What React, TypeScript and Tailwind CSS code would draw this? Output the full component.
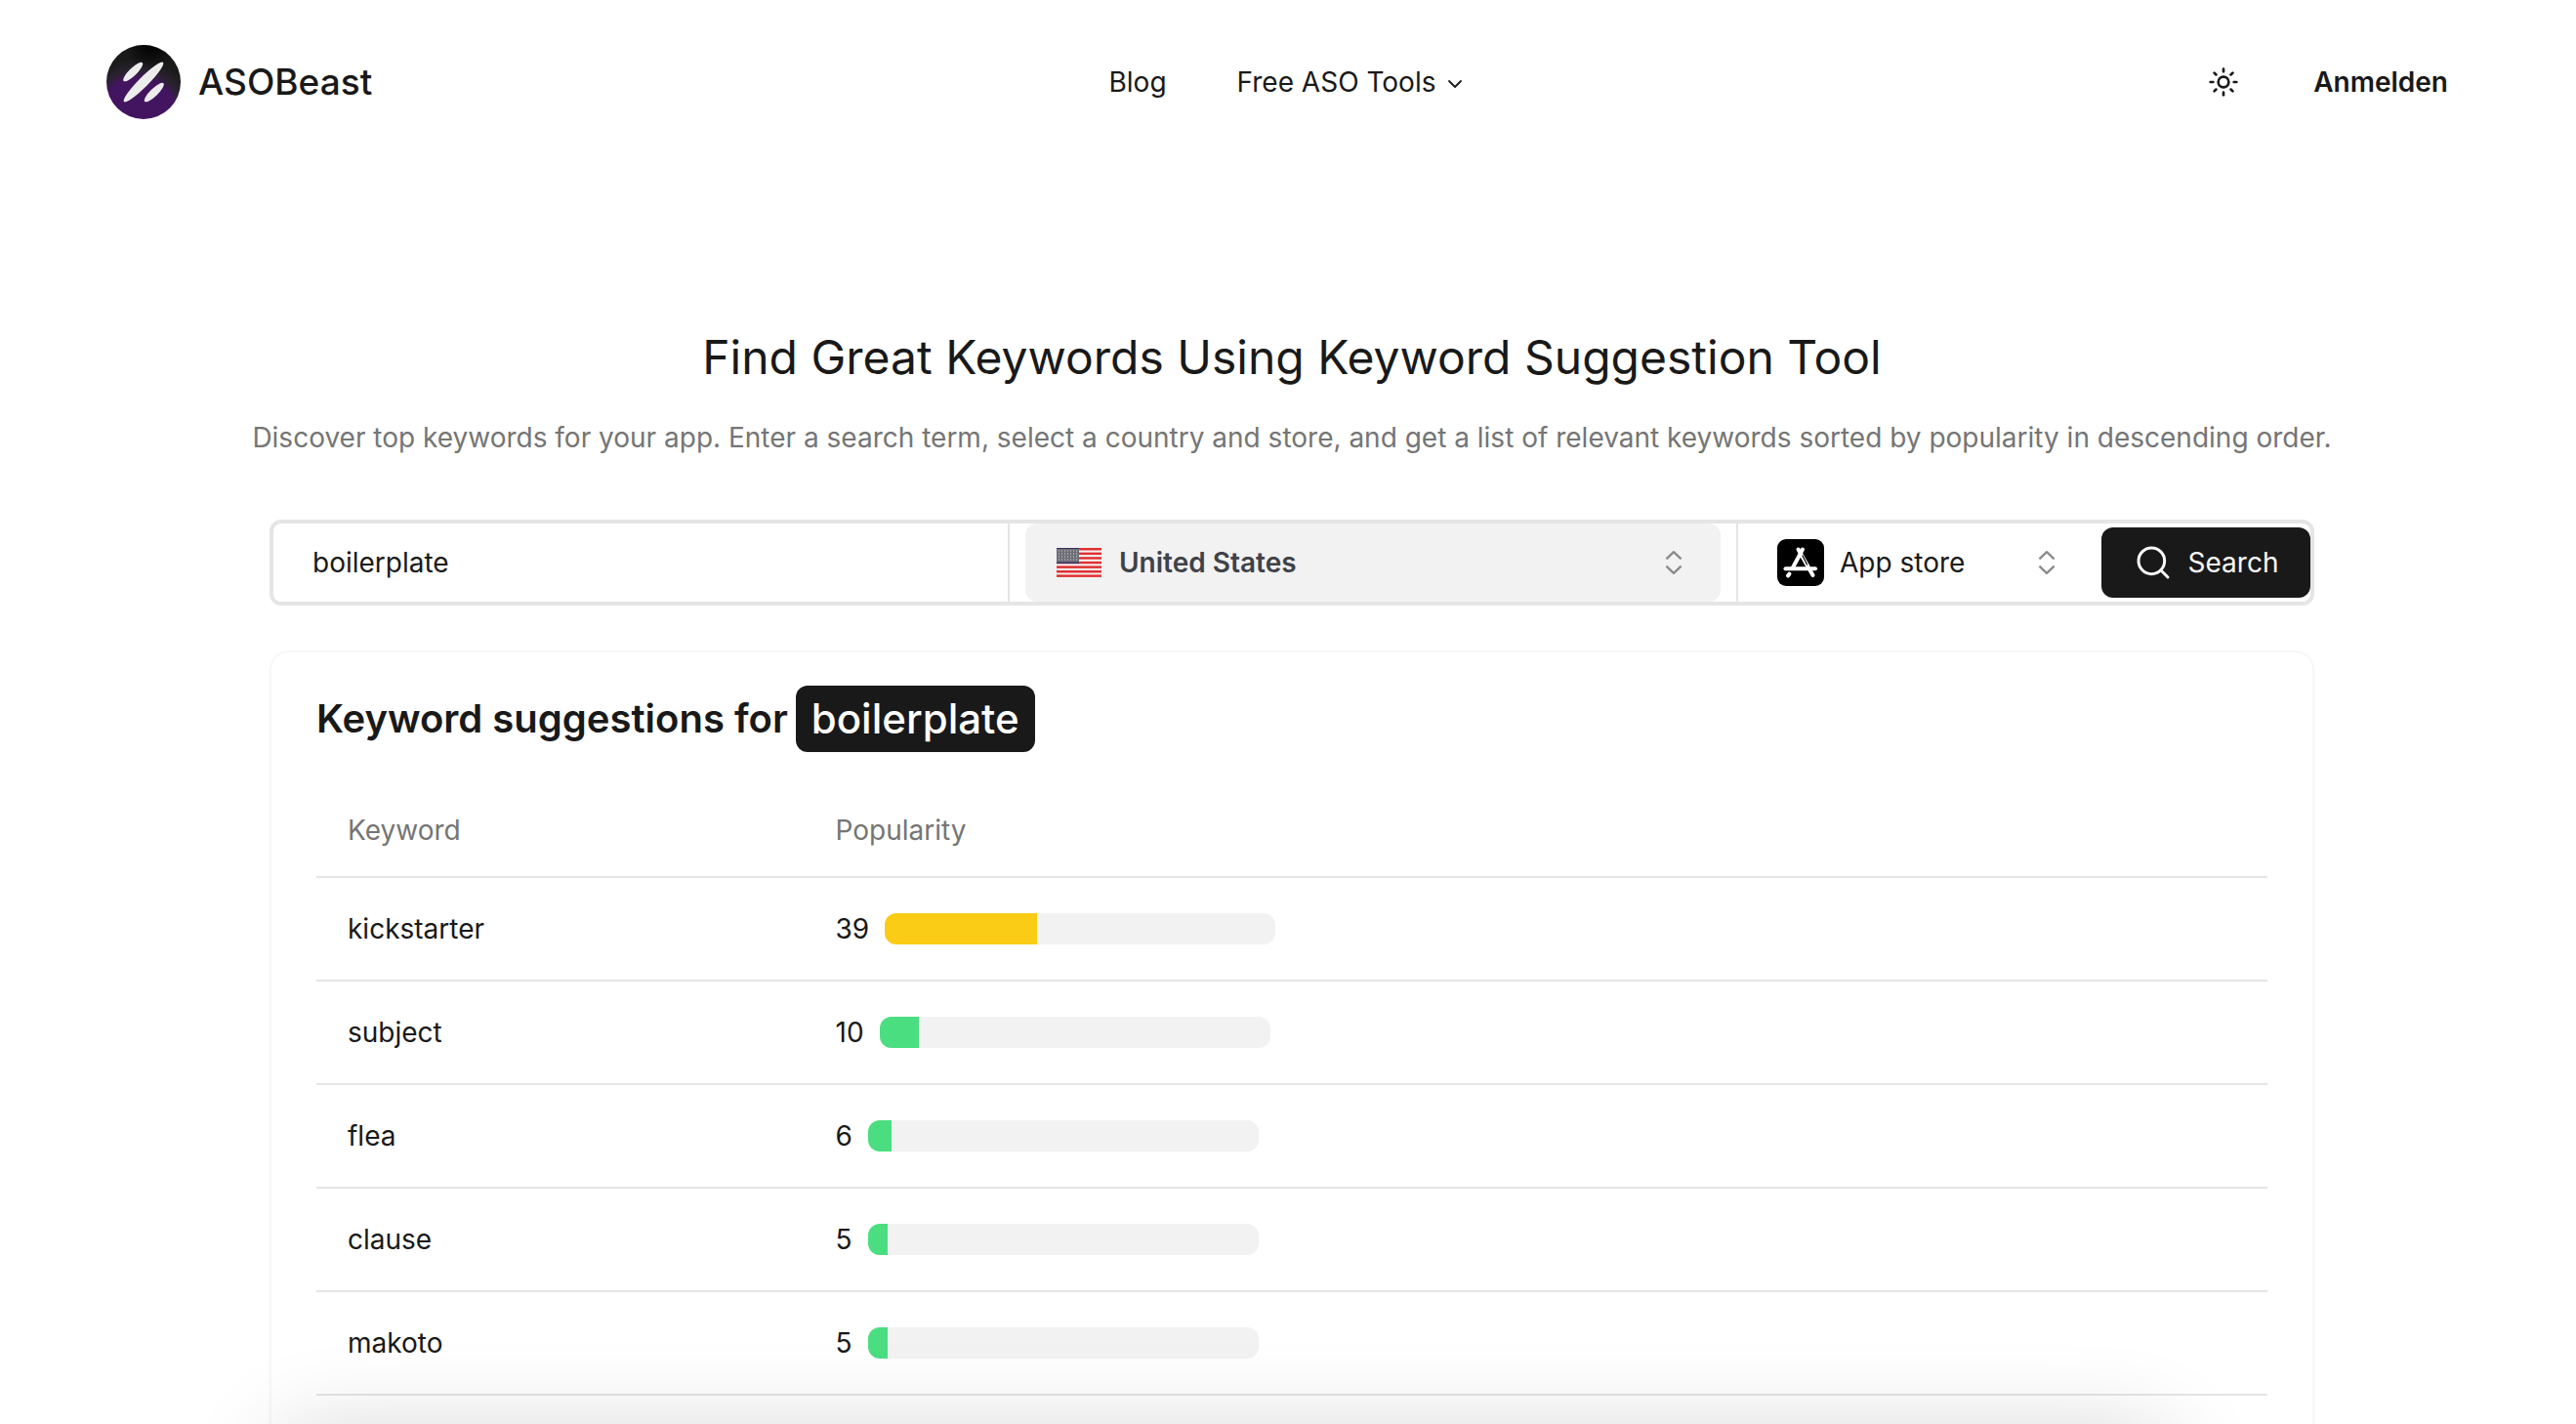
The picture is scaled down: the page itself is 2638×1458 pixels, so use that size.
import React, { useState } from 'react';
import { ChevronDown, Search, Sun } from 'lucide-react';

interface Suggestion {
  keyword: string;
  popularity: number;
}

const suggestions: Suggestion[] = [
  { keyword: 'kickstarter', popularity: 39 },
  { keyword: 'subject', popularity: 10 },
  { keyword: 'flea', popularity: 6 },
  { keyword: 'clause', popularity: 5 },
  { keyword: 'makoto', popularity: 5 },
];

function Logo() {
  return (
    <svg viewBox="0 0 76 76" className="size-19" aria-hidden="true">
      <defs>
        <radialGradient id="logo-glow" cx="0.42" cy="0.98" r="0.8">
          <stop offset="0" stopColor="#43145f" />
          <stop offset="0.66" stopColor="#43145f" />
          <stop offset="0.8" stopColor="#2a2230" />
          <stop offset="1" stopColor="#1a1a1a" />
        </radialGradient>
        <radialGradient id="logo-shade" cx="0.6" cy="0" r="0.35">
          <stop offset="0" stopColor="#000" />
          <stop offset="1" stopColor="#000" stopOpacity="0" />
        </radialGradient>
      </defs>
      <circle cx="38" cy="38" r="38" fill="url(#logo-glow)" />
      <circle cx="38" cy="38" r="38" fill="url(#logo-shade)" />
      <g fill="#ececec">
        <ellipse cx="27.2" cy="27.6" rx="13.4" ry="3.9" transform="rotate(-44 27.2 27.6)" />
        <ellipse cx="38" cy="38" rx="28.4" ry="5" transform="rotate(-45 38 38)" />
        <ellipse cx="48.8" cy="48.6" rx="13.4" ry="3.9" transform="rotate(-44 48.8 48.6)" />
      </g>
    </svg>
  );
}

function FlagUS() {
  return (
    <svg viewBox="0 0 46 30" className="h-[30px] w-[46px] shrink-0" aria-hidden="true">
      <rect width="46" height="30" fill="#f4f4f4" />
      {[0, 4.6, 9.2, 13.8, 18.4, 23, 27.4].map((y) => (
        <rect key={y} y={y} width="46" height="2.5" fill="#e03131" />
      ))}
      <rect width="23" height="16" fill="#6f6f78" />
      <rect width="23" height="1" fill="#35305e" />
      <rect y="14.6" width="23" height="1.4" fill="#35305e" />
      {[3, 6, 9, 12].map((y) => (
        <line key={y} x1="2" x2="22" y1={y} y2={y} stroke="#d6d6d6" strokeWidth="1" strokeDasharray="1 2" />
      ))}
    </svg>
  );
}

function AppStoreIcon() {
  return (
    <svg viewBox="0 0 48 48" className="size-12 shrink-0" aria-hidden="true">
      <rect width="48" height="48" rx="9" fill="#000" />
      <g stroke="#fff" strokeWidth="4" strokeLinecap="round" fill="none">
        <path d="M21.5 10.5 36.5 37" />
        <path d="M8.5 30.2H39" />
        <path d="M26 17 30.5 26" stroke="#000" strokeWidth="1.2" />
        <path d="M26 10.5 15.5 30" />
        <path d="M12.5 35.5 11 37.5" />
      </g>
    </svg>
  );
}

function SortCarets() {
  return (
    <svg
      viewBox="0 0 32 32"
      className="pointer-events-none size-8 shrink-0 text-[#8c8c8c]"
      fill="none"
      stroke="currentColor"
      strokeWidth="2.4"
      strokeLinejoin="round"
      aria-hidden="true"
    >
      <path d="M8.4 12.4 16 5.2l7.6 7.2" />
      <path d="M8.4 19.6l7.6 7.2 7.6-7.2" />
    </svg>
  );
}

function Header() {
  return (
    <header className="grid grid-cols-3 items-center px-[109px] py-[46px]">
      <a href="#" className="flex items-center gap-[18px] justify-self-start text-[37px] leading-[76px] font-medium">
        <Logo />
        ASOBeast
      </a>
      <nav className="flex items-center gap-[72px] justify-self-center text-[28px] leading-10">
        <a href="#blog">Blog</a>
        <button type="button" className="flex items-center gap-2">
          Free ASO Tools
          <ChevronDown className="mt-1 size-6" strokeWidth={1.8} />
        </button>
      </nav>
      <div className="flex items-center gap-[76px] justify-self-end pr-[22px]">
        <button type="button" aria-label="Toggle theme">
          <Sun className="size-8" />
        </button>
        <a href="#login" className="text-[28px] leading-10 font-semibold">
          Anmelden
        </a>
      </div>
    </header>
  );
}

function SearchBar({ term, onChange }: { term: string; onChange: (value: string) => void }) {
  return (
    <form
      className="flex h-[88px] w-full items-stretch rounded-xl border-4 border-[#e5e5e5] text-[28px]"
      onSubmit={(e) => e.preventDefault()}
    >
      <input
        type="text"
        aria-label="Search term"
        value={term}
        onChange={(e) => onChange(e.target.value)}
        className="min-w-0 flex-1 bg-transparent px-10 outline-none"
      />
      <div className="w-[748px] border-x-2 border-[#e5e5e5] px-4">
        <label className="flex h-full items-center gap-[18px] rounded-xl bg-[#f2f2f2] px-8 text-[#3f4249]">
          <FlagUS />
          <select aria-label="Country" className="min-w-0 flex-1 appearance-none font-semibold outline-none">
            <option>United States</option>
          </select>
          <SortCarets />
        </label>
      </div>
      <label className="flex w-[372px] items-center gap-4 px-10">
        <AppStoreIcon />
        <select aria-label="Store" className="min-w-0 flex-1 appearance-none outline-none">
          <option>App store</option>
        </select>
        <SortCarets />
      </label>
      <button
        type="submit"
        className="flex w-[214px] items-center justify-center gap-4 self-center rounded-xl bg-[#191919] py-4 leading-10 text-[#fafafa]"
      >
        <Search className="size-10" strokeWidth={1.8} />
        Search
      </button>
    </form>
  );
}

function PopularityBar({ value }: { value: number }) {
  return (
    <div className="flex items-center gap-4">
      <span>{value}</span>
      <div className="h-8 w-[400px] overflow-hidden rounded-xl bg-[#f2f2f2]">
        <div className={value > 30 ? 'h-full bg-[#facc15]' : 'h-full bg-[#4ade80]'} style={{ width: `${value}%` }} />
      </div>
    </div>
  );
}

export default function App() {
  const [term, setTerm] = useState('boilerplate');

  return (
    <div className="relative flex h-screen flex-col overflow-hidden bg-white font-['Inter','Liberation_Sans',sans-serif] text-[#191919]">
      <Header />

      <main className="mx-auto flex w-full max-w-[2102px] flex-1 flex-col items-center pt-[164px] pl-2">
        <h1 className="text-[48px] leading-[68px]">Find Great Keywords Using Keyword Suggestion Tool</h1>
        <p className="mt-7 text-[28px] leading-10 whitespace-nowrap text-[#757575]">
          Discover top keywords for your app. Enter a search term, select a country and store, and get a list of
          relevant keywords sorted by popularity in descending order.
        </p>

        <div className="mt-16 w-full">
          <SearchBar term={term} onChange={setTerm} />
        </div>

        <section className="mt-[46px] w-full flex-1 rounded-t-[20px] border-2 border-b-0 border-[#f7f7f7] px-[46px] pt-[34px] shadow-xs">
          <h2 className="flex items-center gap-2 text-[40px] leading-[68px] font-semibold">
            Keyword suggestions for
            <span className="rounded-xl bg-[#191919] px-4 text-[42px] font-medium text-white">boilerplate</span>
          </h2>

          <table className="mt-8 w-full text-left text-[28px] leading-10">
            <thead className="text-[#757575]">
              <tr className="h-24 border-b-2 border-[#e5e5e5]">
                <th className="w-1/4 px-8 font-normal">Keyword</th>
                <th className="px-8 font-normal">Popularity</th>
              </tr>
            </thead>
            <tbody>
              {suggestions.map(({ keyword, popularity }) => (
                <tr key={keyword} className="h-[106px] border-b-2 border-[#e5e5e5]">
                  <td className="px-8">{keyword}</td>
                  <td className="px-8">
                    <PopularityBar value={popularity} />
                  </td>
                </tr>
              ))}
            </tbody>
          </table>
        </section>
      </main>

      {/* Soft shadow cast by the panel below the fold */}
      <div className="pointer-events-none absolute top-full right-[16%] left-[11%] mt-4 h-40 rounded-xl shadow-[0_0_100px_rgba(0,0,0,0.2)]" />
    </div>
  );
}
